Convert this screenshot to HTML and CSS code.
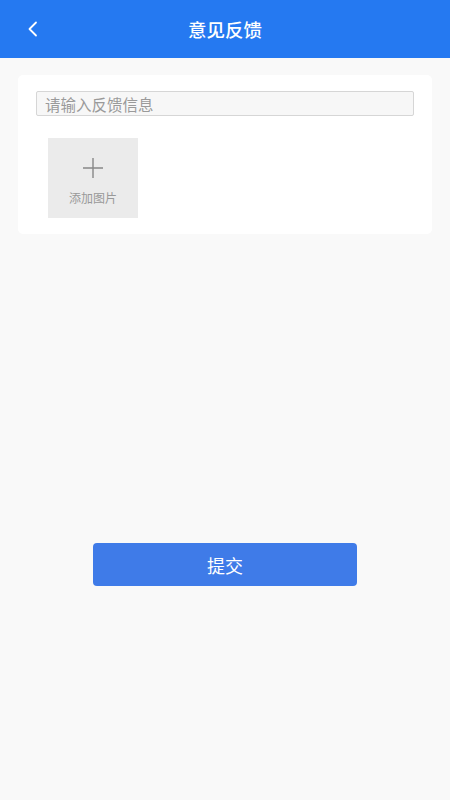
FILE: index.html
```html
<!DOCTYPE html>
<html lang="zh">
<head>
<meta charset="utf-8">
<link rel="stylesheet" href="styles.css">
</head>
<body>
<header class="bar">
  <span class="back"><svg width="12" height="16" viewBox="0 0 12 16"><path d="M9 1.5 L2.5 8 L9 14.5" fill="none" stroke="#fff" stroke-width="1.8" stroke-linecap="round" stroke-linejoin="round"/></svg></span>
  <h1 class="title">意见反馈</h1>
</header>
<main class="main">
  <section class="card">
    <input class="field" type="text" placeholder="请输入反馈信息">
    <div class="add">
      <svg width="22" height="22" viewBox="0 0 22 22"><path d="M11 1 V21 M1 11 H21" stroke="#888" stroke-width="1.4"/></svg>
      <span class="add-text">添加图片</span>
    </div>
  </section>
  <div class="actions"><button class="submit">提交</button></div>
</main>
</body>
</html>
```
FILE: styles.css
```css
* { box-sizing: border-box; }
html, body { margin: 0; padding: 0; }
body {
  width: 450px; height: 800px; background: #f9f9f9;
  font-family: "Noto Sans CJK SC", "Noto Sans", sans-serif;
  overflow: hidden;
}
.bar {
  height: 58px; background: #2579f1; display: flex; align-items: center; justify-content: center; position: relative;
}
.back { position: absolute; left: 27px; top: 21px; display: flex; }
.title { margin: 0; color: #fff; font-size: 18.5px; font-weight: 500; line-height: 1; }
.main { padding: 17px 18px 0; }
.card { background: #fff; border-radius: 5px; padding: 16px 18px 16px 18px; height: 159px; }
.field {
  display: block; width: 378px; height: 25px; border: 1px solid #d6d6d6; border-radius: 2px; background: #f7f7f7;
  font-family: inherit; font-size: 15.5px; padding: 0 0 0 8px; outline: none; color: #333;
}
.field::placeholder { color: #9a9a9a; }
.add {
  width: 90px; height: 80px; background: #ebebeb; margin: 22px 0 0 12px;
  display: flex; flex-direction: column; align-items: center; padding-top: 19px;
}
.add-text { font-size: 12px; color: #999; margin-top: 13px; line-height: 1; }
.actions { display: flex; justify-content: center; margin-top: 309px; }
.submit {
  width: 264px; height: 43px; background: #3f7be8; color: #fff; border: none; border-radius: 4px;
  font-family: inherit; font-size: 18px;
}
```
